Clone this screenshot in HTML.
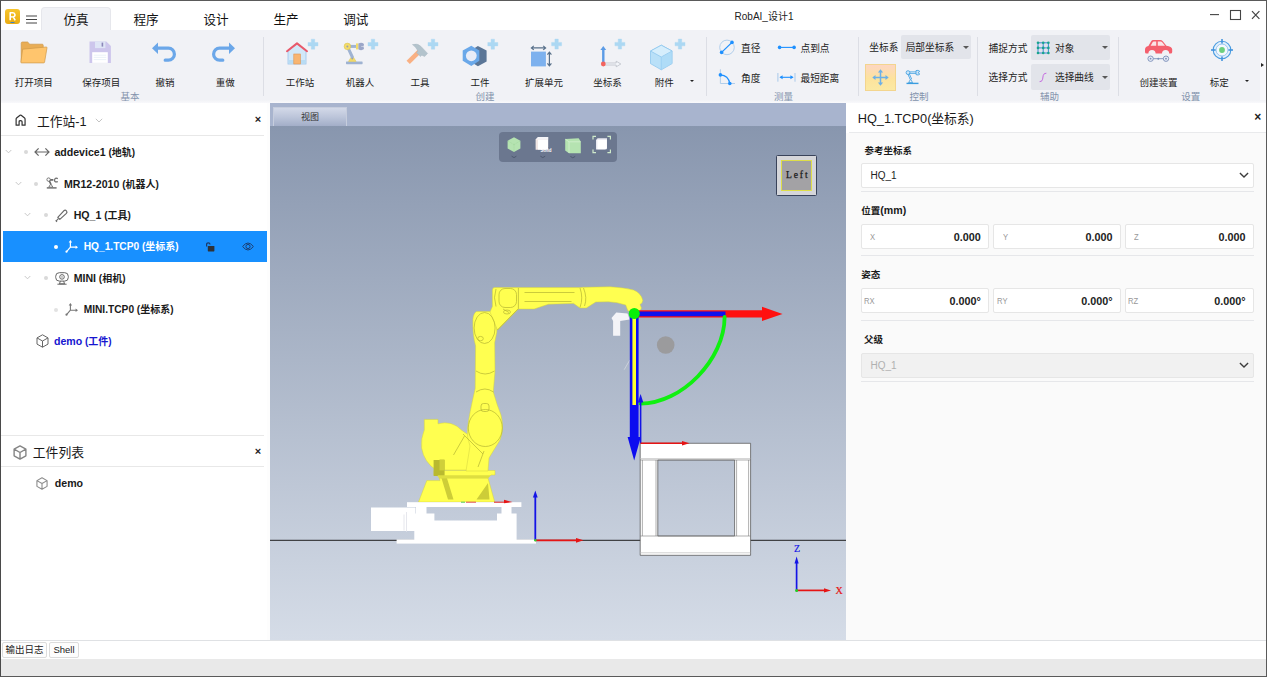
<!DOCTYPE html>
<html lang="zh">
<head>
<meta charset="utf-8">
<title>RobAI_设计1</title>
<style>
*{box-sizing:border-box;margin:0;padding:0}
html,body{width:1267px;height:677px;overflow:hidden;background:#fff}
body{font-family:"Liberation Sans","Noto Sans CJK SC",sans-serif;color:#222;position:relative;font-size:10px}
.abs{position:absolute}
svg{position:absolute;overflow:visible}
#frame{position:absolute;left:0;top:0;width:1267px;height:677px;border:1px solid #5a5a5a;border-left-color:#4a4a4a;border-bottom-width:1.4px;pointer-events:none;z-index:50}
#titlebar{position:absolute;left:0;top:0;width:1267px;height:30px;background:#fff}
#ribbon{position:absolute;left:0;top:30px;width:1267px;height:73px;background:#f1f2f6}
.tab{position:absolute;top:7px;height:23px;width:70px;font-size:12.6px;line-height:27.6px;text-align:center;color:#111;white-space:nowrap}
.tab.active{background:#f1f2f6;border:1px solid #e6e7ec;border-bottom:none;border-radius:4px 4px 0 0;line-height:25.6px}
.rl{position:absolute;top:75.5px;font-size:9.5px;line-height:14px;color:#222;white-space:nowrap;transform:translateX(-50%)}
.gl{position:absolute;top:90px;font-size:9.5px;line-height:13px;color:#8393ac;white-space:nowrap;transform:translateX(-50%)}
.vsep{position:absolute;top:37px;height:59px;width:1px;background:#dcdee5}
.st{position:absolute;font-size:9.7px;line-height:14px;color:#222;white-space:nowrap}
.combo{position:absolute;background:#e2e4ea;border-radius:2px}
.dd{position:absolute;width:0;height:0;border-left:2.2px solid transparent;border-right:2.2px solid transparent;border-top:2.6px solid #222}
.ddc{position:absolute;width:0;height:0;border-left:3.6px solid transparent;border-right:3.6px solid transparent;border-top:3.6px solid #585858}
#left{position:absolute;left:0;top:103px;width:270px;height:537px;background:#fff}
#lsplit{position:absolute;left:267px;top:103px;width:3px;height:537px;background:#fdfdfd}
#view{position:absolute;left:270px;top:103px;width:576px;height:537px;overflow:hidden;background:linear-gradient(#8896ae 22px,#d5dce7 100%)}
#right{position:absolute;left:846px;top:103px;width:421px;height:537px;background:#fafafa}
#bottom{position:absolute;left:0;top:640px;width:1267px;height:20px;background:#fff;border-top:1px solid #dfe1e4}
#status{position:absolute;left:0;top:659px;width:1267px;height:18px;background:#e9e9e9}
.trow{position:absolute;left:0;width:270px;height:30px;font-size:10px;font-weight:bold;color:#1a1a1a;white-space:nowrap}
.trow span.t{position:absolute;top:8px;line-height:14px}
.en{font-size:10.6px}
.en2{font-size:10.2px}
.dot{position:absolute;top:13px;width:4px;height:4px;border-radius:2px;background:#cfcfcf}
.chev{position:absolute}
.hsep{position:absolute;height:1px;background:#e8e8e8}
.plabel{position:absolute;font-size:9.5px;font-weight:bold;color:#1a1a1a;line-height:14px;white-space:nowrap}
.inp{position:absolute;height:25px;background:#fff;border:1px solid #e6e6e6;border-radius:2px}
.inp .k{position:absolute;left:8.5px;top:5px;font-size:9px;line-height:14px;color:#999;transform:scaleX(.85);transform-origin:0 50%}
.inp .v{position:absolute;right:7px;top:5px;font-size:10.8px;line-height:14px;font-weight:bold;color:#222}
.btab{position:absolute;top:.8px;height:16px;border:1px solid #dcdcdc;border-radius:2px;font-size:9.5px;line-height:14.5px;text-align:center;color:#222;background:#fdfdfd}
</style>
</head>
<body>
<div id="titlebar">
<!-- logo -->
<svg style="left:5px;top:9px" width="15" height="15" viewBox="0 0 15 15"><defs><linearGradient id="lg" x1="0" y1="0" x2="0" y2="1"><stop offset="0" stop-color="#f7c52d"/><stop offset="1" stop-color="#e9ab12"/></linearGradient></defs><rect width="15" height="15" rx="3" fill="url(#lg)"/><path d="M5.2 11.3V3.7h2.6a2.1 2.1 0 0 1 .5 4.15L10.2 11.3" fill="none" stroke="#fff" stroke-width="1.6" stroke-linejoin="round"/><path d="M5.2 7.9h2.6" stroke="#fff" stroke-width="1.5"/><rect x="5.5" y="13" width="4" height="1" fill="#3b82c4"/></svg>
<svg style="left:26px;top:15px" width="11" height="9" viewBox="0 0 11 9"><path d="M0 1h11M0 4.5h11M0 8h11" stroke="#444" stroke-width="1"/></svg>
<div class="tab active" style="left:41px">仿真</div>
<div class="tab" style="left:111px">程序</div>
<div class="tab" style="left:181px">设计</div>
<div class="tab" style="left:251px">生产</div>
<div class="tab" style="left:320.800px">调试</div>
<div class="abs" style="left:704px;top:9.700px;width:120px;text-align:center;font-size:10px;line-height:14px;color:#222">RobAI_设计1</div>
<svg style="left:1209px;top:9px" width="52" height="12" viewBox="0 0 52 12"><path d="M1 5.6h9" stroke="#444" stroke-width="1.1"/><rect x="21.5" y="1.5" width="10" height="9" fill="none" stroke="#444" stroke-width="1.1"/><path d="M43 2.2l7.4 7.6M50.4 2.2L43 9.8" stroke="#444" stroke-width="1.2"/></svg>
</div>
<div id="ribbon">
<div class="abs" style="left:1260px;top:0;width:7px;height:73px;background:#f8f8fb"></div>
<div class="abs" style="left:0;top:70px;width:1267px;height:3px;background:linear-gradient(#f1f2f6,#f9f9fb)"></div>
</div>
<div class="abs" style="left:1261px;top:63px;width:0;height:0;border-top:2.700px solid transparent;border-bottom:2.700px solid transparent;border-left:3px solid #222"></div>

<!-- group 基本 -->
<svg style="left:20px;top:41px" width="28" height="23" viewBox="0 0 28 23"><path d="M1.2 21.5V2.2Q1.2 1 2.4 1h5.2l2.2 2.2h12.4q1 0 1 1v3" fill="#e9ad55" stroke="#cf994a" stroke-width=".7"/><path d="M2.6 8.2L26.2 6q.9-.1.8.8L24.6 21q-.1.9-1 .9H1.6q-.8 0-.7-.8z" fill="#ffc56d" stroke="#cf994a" stroke-width=".7"/></svg>
<svg style="left:89px;top:41px" width="23" height="23" viewBox="0 0 23 23"><path d="M.5.5h16.8l4.6 4.6v16.8H.5z" fill="#cdc6ec"/><rect x="6" y=".5" width="10.4" height="6.6" fill="#dfe5f6"/><rect x="12.6" y="1.6" width="1.6" height="4" fill="#8a86b8"/><rect x="3.2" y="11.2" width="15.6" height="10.7" fill="#fff"/><path d="M4.8 14.2h12.4M4.8 16.4h12.4M4.8 18.6h12.4" stroke="#e4edf6" stroke-width=".8"/></svg>
<svg style="left:151px;top:41px" width="26" height="22" viewBox="0 0 26 22"><path d="M1 7.200L7 1.400V5.600H17.400A7.600 7.600 0 0 1 17.400 20.800H14.200Q12.600 20.800 12.600 19.200T14.200 17.600H17.400A4.400 4.400 0 0 0 17.400 8.800H7V13z" fill="#6ba7e9"/></svg>
<svg style="left:210px;top:40.600px" width="26" height="22" viewBox="0 0 26 22"><path d="M25 7.200L19 1.400V5.600H9.600A7.600 7.600 0 0 0 9.600 20.800H12.800Q14.400 20.800 14.400 19.200T12.800 17.600H9.600A4.400 4.400 0 0 1 9.600 8.800H19V13z" fill="#6ba7e9"/></svg>
<div class="rl" style="left:33.7px">打开项目</div>
<div class="rl" style="left:101.3px">保存项目</div>
<div class="rl" style="left:165px">撤销</div>
<div class="rl" style="left:225.3px">重做</div>
<div class="gl" style="left:130px">基本</div>
<div class="vsep" style="left:263px"></div>

<!-- group 创建 -->
<svg width="0" height="0" style="left:0;top:0"><defs><path id="plus" d="M-1.700-5h3.400v3.300h3.300v3.400h-3.300v3.300h-3.400v-3.300h-3.300v-3.400h3.300z" fill="#acd8f3" stroke="#acd8f3" stroke-width=".4" stroke-linejoin="round"/></defs></svg>
<!-- house -->
<svg style="left:285px;top:40px" width="36" height="26" viewBox="285 40 36 26"><rect x="288" y="50.5" width="18" height="13.5" fill="#d2e8f8" stroke="#9cc4ea" stroke-width=".8"/><rect x="288.4" y="60" width="17.2" height="3.6" fill="#b8dcf4"/><path d="M288 51l9-7.5 9 7.5z" fill="#d2e8f8"/><rect x="293.8" y="54" width="6.6" height="10" fill="#f8b571" stroke="#e09450" stroke-width=".6"/><path d="M287 51.2L297 43.4l10 7.8" fill="none" stroke="#e8596b" stroke-width="2" stroke-linecap="round" stroke-linejoin="round"/><use href="#plus" x="313" y="44.2"/></svg>
<!-- robot -->
<svg style="left:345px;top:40px" width="36" height="26" viewBox="345 40 36 26"><rect x="346" y="61.4" width="16.6" height="2.8" rx=".6" fill="#9fb3d2"/><path d="M348.5 61.4l3.8-6 3.8 6z" fill="#f3dc6a" stroke="#d9c04e" stroke-width=".5"/><path d="M352.3 57L347.4 46.4" stroke="#9fb3d2" stroke-width="3" stroke-linecap="round"/><path d="M347.4 46.4h9" stroke="#9fb3d2" stroke-width="3"/><circle cx="347.4" cy="46.4" r="3.3" fill="#f3dc6a" stroke="#d9c04e" stroke-width=".5"/><circle cx="347.4" cy="46.4" r="1" fill="#9a9fae"/><circle cx="352.3" cy="58.6" r=".9" fill="#9a9fae"/><rect x="356" y="43.4" width="2.4" height="6" fill="#f3dc6a"/><path d="M358.4 43.6q3-2 5.6.4l-.4 2.2h-2.4v.6h2.4l.4 2.2q-2.6 2.2-5.6.2z" fill="#9ba6c8"/><use href="#plus" x="373" y="44.2"/></svg>
<!-- hammer -->
<svg style="left:405px;top:40px" width="36" height="26" viewBox="405 40 36 26"><path d="M408.200 62.400L419.600 51.200" stroke="#f9b083" stroke-width="4.600"/><path d="M412.400 44.600q5-1.800 8.600 1.800l6.600 7-3 3.200-2.800-1.400-1.400 1.400-4-4 1.600-1.600q-1.800-3.800-5.600-6.400z" fill="#b3c3cc" stroke="#a3b4be" stroke-width=".4"/><use href="#plus" x="433" y="44.2"/></svg>
<!-- nut -->
<svg style="left:460px;top:40px" width="40" height="28" viewBox="460 40 40 28"><path d="M477.900 46l8.700 4.600v10.800l-8.700 4.800-4-2.500V48.500z" fill="#5b7697"/><path d="M471.300 45.800l8 4.600v10.400l-8 5.200-8.600-5.200V50.400z" fill="#6aa8e9"/><circle cx="471.300" cy="55.800" r="5.400" fill="#e8ecf7"/><use href="#plus" x="492.800" y="44.200"/></svg>
<!-- extend unit -->
<svg style="left:525px;top:38px" width="40" height="30" viewBox="525 38 40 30"><rect x="531" y="51.6" width="14.900" height="14.800" fill="#7db1ee"/><path d="M531.600 47.900h13.800M533.800 45.900l-2.400 2 2.400 2M543.200 45.900l2.400 2-2.400 2" fill="none" stroke="#58708a" stroke-width="1.200"/><path d="M549.400 52.400v13.200M547.400 54.600l2-2.400 2 2.400M547.400 63.400l2 2.400 2-2.400" fill="none" stroke="#58708a" stroke-width="1.200"/><use href="#plus" x="556.600" y="44.100"/></svg>
<!-- coordinate -->
<svg style="left:595px;top:38px" width="40" height="30" viewBox="595 38 40 30"><path d="M603.300 64V49" stroke="#5b9be6" stroke-width="2.400"/><path d="M600.400 50l2.900-3.900 2.900 3.900z" fill="#5b9be6"/><path d="M604 63h12.200v-1.800l4.600 2.800-4.600 2.800V65H604z" fill="#f4f6fa" stroke="#b4b9c2" stroke-width=".7"/><circle cx="603.300" cy="64" r="2.400" fill="#f2645f"/><use href="#plus" x="619.900" y="44.100"/></svg>
<!-- cube -->
<svg style="left:648px;top:38px" width="40" height="34" viewBox="648 38 40 34"><path d="M661.300 45.200l10.800 5.800v12.600l-10.800 6.200-10.800-6.200V51z" fill="#b9e0f8" stroke="#8ec7ee" stroke-width=".8" stroke-linejoin="round"/><path d="M661.300 45.200l10.800 5.800-10.800 6-10.800-6z" fill="#d6eefc" stroke="#8ec7ee" stroke-width=".8" stroke-linejoin="round"/><path d="M661.300 57v12.800" stroke="#8ec7ee" stroke-width=".8"/><path d="M661.300 57l10.800-6v12.600l-10.800 6.200z" fill="#a8d8f6" opacity=".6"/><use href="#plus" x="680" y="44.100"/></svg>
<div class="rl" style="left:300px">工作站</div>
<div class="rl" style="left:360px">机器人</div>
<div class="rl" style="left:420px">工具</div>
<div class="rl" style="left:480px">工件</div>
<div class="rl" style="left:544px">扩展单元</div>
<div class="rl" style="left:607.4px">坐标系</div>
<div class="rl" style="left:664.2px">附件</div>
<div class="dd" style="left:689.700px;top:79.800px"></div>
<div class="gl" style="left:485px">创建</div>
<div class="vsep" style="left:706px"></div>

<!-- group 测量 -->
<svg style="left:716px;top:38px" width="90" height="50" viewBox="716 38 90 50"><circle cx="727" cy="47.400" r="7.300" fill="none" stroke="#a9c9ea" stroke-width=".9"/><path d="M721.600 52.400L732 42.400" stroke="#1e90ff" stroke-width="1.300"/><circle cx="721.600" cy="52.400" r="1.800" fill="#1e90ff"/><circle cx="732" cy="42.400" r="1.800" fill="#1e90ff"/>
<path d="M779.600 47.400h14.500" stroke="#1e90ff" stroke-width="1.100"/><circle cx="779.600" cy="47.400" r="1.800" fill="#1e90ff"/><circle cx="794.100" cy="47.400" r="1.800" fill="#1e90ff"/>
<path d="M720.400 69.300v14.200h14.600" fill="none" stroke="#a9c9ea" stroke-width=".9"/><path d="M720.400 74.900q8 .6 9.400 8.600" fill="none" stroke="#1e90ff" stroke-width="1.200"/><circle cx="720.400" cy="74.900" r="1.800" fill="#1e90ff"/><circle cx="729.800" cy="83.500" r="1.800" fill="#1e90ff"/>
<path d="M777.900 73v8.700M795 73v8.700" stroke="#a9c9ea" stroke-width="1"/><path d="M780.500 77.300h12" stroke="#1e90ff" stroke-width="1.100"/><path d="M779.400 77.300l3.200-2v4zM793.600 77.300l-3.200-2v4z" fill="#1e90ff"/></svg>
<div class="st" style="left:741px;top:41.500px">直径</div>
<div class="st" style="left:800.500px;top:41.500px">点到点</div>
<div class="st" style="left:741px;top:71.500px">角度</div>
<div class="st" style="left:800.500px;top:71.500px">最短距离</div>
<div class="gl" style="left:783.500px">测量</div>
<div class="vsep" style="left:858px"></div>

<!-- group 控制 -->
<div class="st" style="left:869.300px;top:41px">坐标系</div>
<div class="combo" style="left:901px;top:35px;width:70px;height:24px"></div>
<div class="st" style="left:905.700px;top:41px">局部坐标系</div>
<div class="ddc" style="left:962.600px;top:46px"></div>
<div class="abs" style="left:865px;top:63.500px;width:31px;height:27px;background:linear-gradient(#fdd6c2,#fde39c 55%,#fbe9a4);border:1px solid #f3d58e"></div>
<svg style="left:872px;top:69px" width="17" height="17" viewBox="-8.500 -8.500 17 17"><path d="M0-5.500v11M-5.500 0h11" stroke="#6cb0e8" stroke-width="1.500"/><path d="M0-8.200l2.600 3.200h-5.200zM0 8.200l2.600-3.200h-5.200zM-8.200 0l3.200-2.600v5.200zM8.200 0l-3.200-2.600v5.200z" fill="#6cb0e8"/></svg>
<svg style="left:905px;top:69px" width="17" height="16" viewBox="905 69 17 16"><path d="M906.500 83.400h12" stroke="#3b9de0" stroke-width="1.400"/><path d="M908.600 82.600l2-3.400 2 3.400z" fill="none" stroke="#3b9de0" stroke-width=".8"/><path d="M911 79.400l-2.800-6.400M909.600 72.600h6.600" stroke="#3b9de0" stroke-width="2.200"/><path d="M911 79.400l-2.800-6.400M909.600 72.600h6.600" stroke="#cfe6f8" stroke-width=".9"/><circle cx="908" cy="72.600" r="1.900" fill="#cfe6f8" stroke="#3b9de0" stroke-width=".8"/><path d="M916 70.600q2.400-1 3.800.8l-1.400.8v1l1.400.8q-1.400 1.800-3.800.6z" fill="#cfe6f8" stroke="#3b9de0" stroke-width=".8"/></svg>
<div class="gl" style="left:919px">控制</div>
<div class="vsep" style="left:977px"></div>

<!-- group 辅助 -->
<div class="st" style="left:988.600px;top:41.800px">捕捉方式</div>
<div class="st" style="left:988.600px;top:71.400px">选择方式</div>
<div class="combo" style="left:1031px;top:35px;width:79px;height:25px"></div>
<div class="combo" style="left:1031px;top:64px;width:79px;height:25.500px"></div>
<svg style="left:1036px;top:41px" width="14" height="14" viewBox="1036 41 14 14"><path d="M1038 42.800h10.400v10.200H1038zM1043.200 42.800v10.200M1038 47.900h10.400" fill="none" stroke="#2b7fd4" stroke-width=".9"/><g fill="#17a58c"><circle cx="1038" cy="42.800" r="1.300"/><circle cx="1043.200" cy="42.800" r="1.300"/><circle cx="1048.400" cy="42.800" r="1.300"/><circle cx="1038" cy="47.900" r="1.300"/><circle cx="1043.200" cy="47.900" r="1.300"/><circle cx="1048.400" cy="47.900" r="1.300"/><circle cx="1038" cy="53" r="1.300"/><circle cx="1043.200" cy="53" r="1.300"/><circle cx="1048.400" cy="53" r="1.300"/></g></svg>
<svg style="left:1038px;top:72px" width="10" height="11" viewBox="1038 72 10 11"><path d="M1039.600 81.600q2.400.4 3-2.400l.6-3.600q.6-2.600 3.200-2.400" fill="none" stroke="#c56be0" stroke-width="1"/></svg>
<div class="st" style="left:1055px;top:41.800px">对象</div>
<div class="st" style="left:1055px;top:71.400px">选择曲线</div>
<div class="ddc" style="left:1101.600px;top:46.300px"></div>
<div class="ddc" style="left:1101.600px;top:76px"></div>
<div class="gl" style="left:1049.400px">辅助</div>
<div class="vsep" style="left:1118px"></div>

<!-- group 设置 -->
<svg style="left:1143px;top:38px" width="32" height="26" viewBox="1143 38 32 26"><path d="M1145 50.400q-.4-3.600 3.400-4.400l2.600-4.600q.8-1.400 2.400-1.400h6.800q1.600 0 2.600 1.200l3.600 4.600q5.400.6 5.800 3.400v2.800q0 1.600-1.600 1.600h-1.400a3.600 3.600 0 0 0-7.200 0h-6.400a3.600 3.600 0 0 0-7.200 0h-1.800q-1.600 0-1.600-1.600z" fill="#f45f6d"/><path d="M1150.600 45.800l2-3.600q.4-.6 1.200-.6h2.400v4.200zM1157.800 41.600h3q.8 0 1.400.6l2.800 3.600h-7.200z" fill="#fbe4e6"/><path d="M1150.600 58.700h15.400" stroke="#7a8fb8" stroke-width=".9"/><circle cx="1150.600" cy="58.700" r="2.700" fill="#e8ecf7" stroke="#7a8fb8" stroke-width=".9"/><circle cx="1166" cy="58.700" r="2.700" fill="#e8ecf7" stroke="#7a8fb8" stroke-width=".9"/><circle cx="1150.600" cy="58.700" r=".9" fill="#7a8fb8"/><circle cx="1166" cy="58.700" r=".9" fill="#7a8fb8"/><circle cx="1158.300" cy="58.700" r="1" fill="#7a8fb8"/></svg>
<svg style="left:1210px;top:38px" width="24" height="24" viewBox="-12 -12 24 24"><circle r="8.800" fill="#e4f0fb" stroke="#4a9ce0" stroke-width="1.100"/><circle r="6" fill="#f4f8fd" stroke="#8cc0ee" stroke-width=".9"/><path d="M0-11v4.600M0 11v-4.600M-11 0h4.600M11 0h-4.600" stroke="#3b8edc" stroke-width="1.500"/><circle r="2.900" fill="#6ccf7e"/></svg>
<div class="rl" style="left:1158.600px">创建装置</div>
<div class="rl" style="left:1219.200px">标定</div>
<div class="dd" style="left:1244.800px;top:79.800px"></div>
<div class="gl" style="left:1190.800px">设置</div>
<div id="left"></div>
<div id="lsplit"></div>
<!-- header -->
<svg style="left:15.400px;top:113.600px" width="11.200" height="12.200" viewBox="0 0 12 13"><path d="M1.200 12V5.200Q1.200 4.600 1.700 4.200L5.400 1.300Q6 .9 6.600 1.300L10.300 4.200Q10.800 4.600 10.800 5.200V12H7.600V8.200Q7.600 7 6 7T4.400 8.200V12z" fill="none" stroke="#333" stroke-width="1.300" stroke-linejoin="round"/></svg>
<div class="abs" style="left:37px;top:112.800px;font-size:12.75px;line-height:18px;color:#1a1a1a;white-space:nowrap">工作站-1</div>
<svg style="left:95px;top:118px" width="8" height="5" viewBox="0 0 8 5"><path d="M.8.800L4 4 7.200.800" fill="none" stroke="#c4c4c4" stroke-width="1"/></svg>
<div class="abs" style="left:254.800px;top:112px;font-size:11px;line-height:14px;font-weight:bold;color:#222">×</div>
<div class="hsep" style="left:1px;top:135px;width:263px"></div>

<!-- selected row bg -->
<div class="abs" style="left:3px;top:231px;width:264px;height:31px;background:#1890ff"></div>

<!-- row 1 -->
<svg class="chev" style="left:5px;top:149.300px" width="7" height="5" viewBox="0 0 8 5"><path d="M.8.800L4 4 7.200.800" fill="none" stroke="#c0c0c0" stroke-width="1"/></svg>
<div class="abs dotc" style="left:24px;top:150.300px;width:4px;height:4px;border-radius:2px;background:#d9d9d9"></div>
<svg style="left:34px;top:147.300px" width="16" height="10" viewBox="0 0 16 10"><path d="M1.200 5h13.600M4.600 1.400L1 5l3.600 3.600M11.400 1.400L15 5l-3.600 3.600" fill="none" stroke="#666" stroke-width="1.200"/></svg>
<div class="trow" style="top:137.300px"><span class="t" style="left:54.400px"><span class="en">addevice1</span> (地轨)</span></div>
<!-- row 2 -->
<svg class="chev" style="left:14.500px;top:180.650px" width="7" height="5" viewBox="0 0 8 5"><path d="M.8.800L4 4 7.200.800" fill="none" stroke="#c0c0c0" stroke-width="1"/></svg>
<div class="abs" style="left:34px;top:181.650px;width:4px;height:4px;border-radius:2px;background:#d9d9d9"></div>
<svg style="left:46px;top:177.150px" width="13" height="12" viewBox="0 0 13 12"><path d="M.800 10.900h9.800" stroke="#6a6a6a" stroke-width="1.400"/><path d="M2.800 10.200l2-3.400 2 3.400z" fill="#fff" stroke="#6a6a6a" stroke-width=".9"/><path d="M4.800 7L2.800 2.800H7.400" fill="none" stroke="#6a6a6a" stroke-width="1.700" stroke-linejoin="round"/><circle cx="2.600" cy="2.600" r="1.700" fill="#fff" stroke="#6a6a6a" stroke-width=".9"/><path d="M11.800 1.600q-2.900-1.300-3.200 1.400t3.200 1.600" fill="none" stroke="#6a6a6a" stroke-width="1.200"/></svg>
<div class="trow" style="top:168.750px"><span class="t" style="left:64px"><span class="en">MR12-2010</span> (机器人)</span></div>
<!-- row 3 -->
<svg class="chev" style="left:24px;top:212px" width="7" height="5" viewBox="0 0 8 5"><path d="M.8.800L4 4 7.200.800" fill="none" stroke="#c0c0c0" stroke-width="1"/></svg>
<div class="abs" style="left:43.500px;top:213px;width:4px;height:4px;border-radius:2px;background:#d9d9d9"></div>
<svg style="left:55px;top:209px" width="13" height="13" viewBox="0 0 13 13"><path d="M1 12.200l2.400-2.600M.6 11.400l1.400 1.400" stroke="#6a6a6a" stroke-width="1.100"/><path d="M2.800 8.400L8.800 1.800q1.400-1.200 2.600 0t0 2.600L4.800 10.400z" fill="none" stroke="#6a6a6a" stroke-width="1.200" stroke-linejoin="round"/></svg>
<div class="trow" style="top:200.200px"><span class="t" style="left:73.700px"><span class="en">HQ_1</span> (工具)</span></div>
<!-- row 4 selected -->
<div class="abs" style="left:53.500px;top:244.500px;width:4px;height:4px;border-radius:2px;background:#fff"></div>
<svg style="left:65px;top:240px" width="14" height="13" viewBox="0 0 14 13"><path d="M5.400 1.400V7.200H11.600M5.400 7.200L1.600 11.600" fill="none" stroke="#fff" stroke-width="1.200"/><path d="M5.400 0l1.700 2.400H3.700zM13 7.200l-2.400 1.700V5.500z" fill="#fff"/><circle cx="1.500" cy="11.700" r="1.100" fill="#fff"/></svg>
<div class="trow" style="top:231.600px;color:#fff"><span class="t" style="left:83.700px"><span class="en2">HQ_1.TCP0</span> (坐标系)</span></div>
<svg style="left:205px;top:241.500px" width="10" height="10" viewBox="0 0 10 10"><path d="M1.600 4.400V2.600Q1.600.800 3.300.800T5 2.600" fill="none" stroke="#1c3a68" stroke-width="1.200"/><rect x="2.800" y="4" width="6.600" height="5.400" rx=".6" fill="#2e3238"/></svg>
<svg style="left:242px;top:242px" width="12" height="9" viewBox="0 0 12 9"><path d="M.6 4.500Q6-2.500 11.400 4.500 6 11.500.6 4.500z" fill="none" stroke="#1c3e72" stroke-width="1"/><circle cx="6" cy="4.500" r="2.100" fill="none" stroke="#1c3e72" stroke-width="1"/></svg>
<!-- row 5 -->
<svg class="chev" style="left:24px;top:275.200px" width="7" height="5" viewBox="0 0 8 5"><path d="M.8.800L4 4 7.200.800" fill="none" stroke="#c0c0c0" stroke-width="1"/></svg>
<div class="abs" style="left:43.500px;top:276.200px;width:4px;height:4px;border-radius:2px;background:#d9d9d9"></div>
<svg style="left:55px;top:271.700px" width="14" height="13" viewBox="0 0 14 13"><rect x=".700" y=".700" width="12.600" height="8.400" rx="3.600" fill="none" stroke="#666" stroke-width="1"/><circle cx="7" cy="4.900" r="2.300" fill="none" stroke="#666" stroke-width="1"/><circle cx="7" cy="4.900" r=".7" fill="#666"/><path d="M5.400 9.200l-1 2.600h5.200l-1-2.600M2.400 12.200h9.200" fill="none" stroke="#666" stroke-width="1"/></svg>
<div class="trow" style="top:263.100px"><span class="t" style="left:73.700px"><span class="en">MINI</span> (相机)</span></div>
<!-- row 6 -->
<div class="abs" style="left:53.500px;top:307.550px;width:4px;height:4px;border-radius:2px;background:#e2e2e2"></div>
<svg style="left:65px;top:303.050px" width="14" height="13" viewBox="0 0 14 13"><path d="M5.400 1.400V7.200H11.600M5.400 7.200L1.600 11.600" fill="none" stroke="#777" stroke-width="1.100"/><path d="M5.400 0l1.700 2.400H3.700zM13 7.200l-2.400 1.700V5.500z" fill="#777"/><circle cx="1.500" cy="11.700" r="1.100" fill="#777"/></svg>
<div class="trow" style="top:294.550px"><span class="t" style="left:83.700px"><span class="en2">MINI.TCP0</span> (坐标系)</span></div>
<!-- row 7 -->
<svg style="left:35.500px;top:333.800px" width="13" height="14" viewBox="0 0 13 14"><path d="M6.500.800l5.500 3.100v6.200l-5.500 3.100L1 10.100V3.900zM1 3.900L6.500 7 12 3.900M6.500 7v6.200" fill="none" stroke="#666" stroke-width="1" stroke-linejoin="round"/></svg>
<div class="trow" style="top:325.900px;color:#1616d0"><span class="t" style="left:54px"><span class="en">demo</span> (工件)</span></div>

<!-- workpiece list -->
<div class="hsep" style="left:1px;top:435px;width:263px"></div>
<svg style="left:13px;top:444.500px" width="14" height="15" viewBox="0 0 13 14"><path d="M6.500.800l5.500 3.100v6.200l-5.500 3.100L1 10.100V3.900zM1 3.900L6.500 7 12 3.900M6.500 7v6.200" fill="none" stroke="#858585" stroke-width="1.300" stroke-linejoin="round"/></svg>
<div class="abs" style="left:32.800px;top:443.800px;font-size:12.8px;line-height:18px;color:#1a1a1a;white-space:nowrap">工件列表</div>
<div class="abs" style="left:254.800px;top:444px;font-size:11px;line-height:14px;font-weight:bold;color:#222">×</div>
<div class="hsep" style="left:1px;top:465.700px;width:263px"></div>
<svg style="left:36px;top:476.500px" width="12" height="13" viewBox="0 0 13 14"><path d="M6.500.800l5.500 3.100v6.200l-5.500 3.100L1 10.100V3.900zM1 3.900L6.500 7 12 3.900M6.500 7v6.200" fill="none" stroke="#8c8c8c" stroke-width="1.200" stroke-linejoin="round"/></svg>
<div class="trow" style="top:468px"><span class="t" style="left:54.800px"><span class="en">demo</span></span></div>
<div id="view"></div>
<!-- view tab strip -->
<div class="abs" style="left:270px;top:103px;width:576px;height:22.500px;background:#a8b4ce"></div>
<div class="abs" style="left:273px;top:106.500px;width:74px;height:19px;background:linear-gradient(#d3d9e8,#bcc5da 50%,#a3aec8);border:1px solid #c6cddd;border-bottom:none;font-size:9px;line-height:18px;text-align:center;color:#333">视图</div>
<svg style="left:270px;top:125px" width="576" height="515" viewBox="270 125 576 515">
<!-- ground line -->
<path d="M270 540.300H846" stroke="#1e1e1e" stroke-width="1"/>
<!-- toolbar pill -->
<rect x="499" y="132" width="118" height="30" rx="4" fill="#6b778f"/>
<g>
<path d="M514 137.200l6.400 3.600v7.600l-6.400 3.600-6.400-3.600v-7.600z" fill="#b5e3b1"/><path d="M514 144.600v7.200M514 144.600l-6.200-3.600M514 144.600l6.200-3.600" stroke="#9ad296" stroke-width=".6" stroke-dasharray="1 1"/>
<path d="M511.600 156.200l2.400 1.400 2.400-1.400" fill="none" stroke="#4e5a70" stroke-width="1"/>
<path d="M535.600 139.400l2.400-2.400h10.200v10.400l-2.400 2.400h-10.200z" fill="#f0e6e4"/><rect x="538" y="139.600" width="10" height="10" fill="#fff"/><path d="M535.800 139.400l2.300-2.300h10v2.300z" fill="#f4f4f8"/>
<path d="M540.400 156.200l2.400 1.400 2.400-1.400" fill="none" stroke="#4e5a70" stroke-width="1"/>
<path d="M565.200 139L578.600 138.300L580.800 141.600V153.200H569L565.200 150.600z" fill="#b5e3b1"/><path d="M565.400 139.200L569 141.800V153M569 141.800H580.600" fill="none" stroke="#d8f0d5" stroke-width=".7"/>
<path d="M570.400 156.400l2.400 1.400 2.400-1.400" fill="none" stroke="#4e5a70" stroke-width="1"/>
<path d="M596 140l1.600-1.800h9.400v9.400l-1.600 1.800h-9.400z" fill="#e8e8f0"/><rect x="597.400" y="139.800" width="9.400" height="9.400" fill="#fff"/>
<path d="M593 139.400v-3h3M607.400 136.400h3v3M610.400 149.600v3h-3M596 152.600h-3v-3" fill="none" stroke="#cfeacb" stroke-width="1.200"/>
</g>
<text x="546" y="151.600" font-size="4.500" fill="#fff" font-family="Liberation Sans,sans-serif" text-anchor="middle" font-weight="bold">Solid</text>
<!-- Left cube -->
<rect x="776.500" y="155.500" width="40" height="40" rx="1" fill="#d5d6da" stroke="#39435a" stroke-width="1"/>
<rect x="781.500" y="160.500" width="30" height="30" fill="#a3a2a5" stroke="#e2e23c" stroke-width=".9"/>
<text x="797.700" y="178.100" font-size="9.600" fill="#1c1c1c" font-family="Liberation Serif,serif" text-anchor="middle" letter-spacing="1.900" stroke="#1c1c1c" stroke-width=".25">Left</text>

<!-- robot -->
<g fill="#ffff50" stroke="#d2d240" stroke-width=".5" stroke-linejoin="round">
<!-- base drum -->
<path d="M424.300 419.400H438V423.800Q452 420 462 430.500L476 440L488 470H436Q424 462 421.600 448Q420.800 438 424.300 430z"/>
<!-- pedestal -->
<path d="M426.800 480.600H440L439.200 478H488L494.700 502H418.500z"/>
<path d="M434 470.500H495V475H491L488 478H439.200L437 475H434z"/>
<rect x="433.600" y="460" width="11" height="16" fill="#b9b930" stroke="none"/>
<rect x="439.500" y="459.400" width="5" height="11" fill="#cfcf3a" stroke="none"/>
<!-- lower arm -->
<path d="M476.500 311.500H490L496.800 318V332L494.700 342.500L495 371L493.300 392Q497 405 501 415Q504.500 428 500 440L489 458L488 471H466L470 446Q466.500 438 467.600 428Q469 415 475.200 388.600L475.600 346Q472.500 335 472.900 319.500Q473.500 313 476.500 311.500z"/>
<!-- upper arm -->
<path d="M494.500 287.600H580L583 287.300L610 286.800Q624 287.500 633.600 290Q641 293 642.800 300.300Q642.800 303 640 304.500L641.500 308L640 311H628L625.700 305Q617 302 608.400 301.800L595.800 302L586.300 308H580L573.600 303.400L548.400 304.200L534.200 309H518.400L497.500 330L490 312L492.400 306.600V290Q492.600 287.600 494.500 287.600z"/>
</g>
<path d="M441.500 478.200h5.500l6.500 21.300h-5.500zM488 483l1.500 16.500h-13z" fill="#cdcd38"/><path d="M437.500 475.200h53l-2.500 2.800h-48.500z" fill="#dede40"/>
<g fill="none" stroke="#b4b432" stroke-width=".7">
<path d="M496 289q-3 8.500 0 17.500M518.400 288v20.500M524.500 292.500h50M524.500 301.500h47M580 288q3.500 10 0 19.500M583.500 288q4 10 1 18M518.400 308.500l-21 21.500M503 309l6 3.500"/>
<rect x="499" y="288.500" width="17.500" height="19" rx="6"/>
<ellipse cx="507" cy="312" rx="3.500" ry="2"/>
<ellipse cx="484.600" cy="328" rx="10.500" ry="15.500"/><ellipse cx="480.500" cy="338.600" rx="2.800" ry="2.200"/>
<ellipse cx="485.300" cy="428" rx="17" ry="18.500"/><rect x="481" y="403.500" width="8" height="8" rx="2.500"/>
<path d="M476 371q9 6 18.500 0M476 392q9-6 17.500 0M453.500 455l11-19M463 434l20 20M478 467l6-16"/>

</g>
<!-- tool white -->
<path d="M611.500 318L616.300 312.500L627.500 313.500L629.700 319.500L620.200 321V335.800H613.100V321z" fill="#f3f3f7"/>
<path d="M624.200 369.700l5.500-9.500" stroke="#d4d7e0" stroke-width=".8"/>
<!-- grey sphere -->
<circle cx="665.700" cy="345" r="8.800" fill="#9b9b9d"/>

<!-- track -->
<g fill="#fff">
<rect x="407" y="502.200" width="114.400" height="4.800"/>
<rect x="371" y="507.500" width="44.500" height="23.500"/>
<path d="M414.300 513.400h20.100v7.100h62.600v-7.100h19.600V540H414.300z"/><rect x="416" y="506.500" width="10.500" height="7.500"/><rect x="501.500" y="506.500" width="10" height="7.500"/>
<rect x="396.600" y="539.400" width="139.400" height="4.200"/>
</g>
<path d="M404 514.500v16M406.500 512v20" stroke="#dfe1e8" stroke-width=".8"/>
<path d="M466 502.200h10" stroke="#e05050" stroke-width="1"/><path d="M461 502.200h4" stroke="#5c5" stroke-width="1"/>
<path d="M494 502.200h10" stroke="#e02020" stroke-width="1"/><path d="M504 499.800l8.500 2.300-8.500 1.200z" fill="#e61414"/>
<!-- small triad at track end -->
<path d="M535.300 540.300V496" stroke="#1414e6" stroke-width="1.800"/><path d="M532.900 497.500l2.400-7 2.400 7z" fill="#1414e6"/>
<path d="M535.300 540.300H577" stroke="#e61414" stroke-width="1.800"/><path d="M576 537.900l7.500 2.400-7.500 2.400z" fill="#e61414"/>
<circle cx="535.300" cy="540.300" r="1.200" fill="#3c3"/>

<!-- table -->
<path d="M640.200 443.300h110.400v112H640.200zM657.800 460v76h76.800v-76z" fill="#fff" fill-rule="evenodd" stroke="#4a4a4a" stroke-width=".7"/>
<path d="M640.200 460h110.400M640.200 536h110.400M642.400 460v76M656 460v76M736.600 460v76M748.600 460v76" stroke="#7a7a7a" stroke-width=".6" fill="none"/>
<path d="M640.600 458.600h109.600M640.600 552.800h109.600" stroke="#cdcdcd" stroke-width=".9"/>
<path d="M658 540.300h76.400" stroke="#1e1e1e" stroke-width="0"/>
<!-- big gizmo -->
<path d="M634 313.900H764" stroke="#ff1010" stroke-width="7.200"/>
<path d="M762 306.700l20.500 7.200-20.500 7.200z" fill="#ff1010"/>
<path d="M634 313.900h91.500" stroke="#1010ee" stroke-width="4.600"/>
<path d="M634.200 313V440" stroke="#0c0cf0" stroke-width="8.800"/>
<path d="M627.600 437h13.200l-6.600 23.500z" fill="#0c0cf0"/>
<path d="M634.200 313v92" stroke="#ffff30" stroke-width="3.600"/>
<path d="M724.600 317C724.600 359.400 681.700 403.600 640.500 403.600" fill="none" stroke="#10f010" stroke-width="3.800" stroke-linecap="round"/>
<circle cx="634.300" cy="313.500" r="5.500" fill="#08ee08"/>
<!-- small triad at table -->
<path d="M640.600 443.300V399" stroke="#1414e6" stroke-width="1.600"/><path d="M637.900 402.500l2.700-8.500 2.700 8.500z" fill="#1414e6"/>
<path d="M640.600 443.300H683" stroke="#e61414" stroke-width="1.600"/><path d="M682 441l7.500 2.300-7.500 2.300z" fill="#e61414"/>

<!-- world triad -->
<path d="M796.600 590.400V562" stroke="#1414e6" stroke-width="1.700"/><path d="M794.500 563.500l2.100-7 2.100 7z" fill="#1414e6"/>
<path d="M796.600 590.400H825" stroke="#e61414" stroke-width="1.700"/><path d="M824 588.300l7 2.100-7 2.100z" fill="#e61414"/>
<circle cx="796.600" cy="590.400" r="1.500" fill="#2c2"/>
<text x="797" y="552" font-size="10" fill="#1414e6" font-family="Liberation Serif,serif" text-anchor="middle" stroke="#1414e6" stroke-width=".2">Z</text>
<text x="839" y="593.800" font-size="10" fill="#e61414" font-family="Liberation Serif,serif" text-anchor="middle" stroke="#e61414" stroke-width=".2">X</text>
</svg>
<div id="right"></div>
<div class="abs" style="left:846px;top:103px;width:421px;height:29.500px;background:#fff"></div>
<div class="abs" style="left:857.700px;top:110px;font-size:12.75px;line-height:18px;color:#1a1a1a;white-space:nowrap">HQ_1.TCP0(坐标系)</div>
<div class="abs" style="left:1254.200px;top:109.800px;font-size:12px;line-height:14px;font-weight:bold;color:#222">×</div>
<div class="hsep" style="left:849px;top:132.300px;width:418px;background:#e9eaec"></div>

<div class="plabel" style="left:864.400px;top:144px">参考坐标系</div>
<div class="inp" style="left:860.500px;top:163px;width:393px;height:24.500px"><span class="abs" style="left:9px;top:5px;font-size:10px;line-height:14px;color:#222">HQ_1</span>
<svg style="left:377.200px;top:7.600px" width="10" height="6.400" viewBox="0 0 11 7"><path d="M1 1.200l4.500 4.400L10 1.200" fill="none" stroke="#3c3c3c" stroke-width="1.500"/></svg></div>
<div class="hsep" style="left:861px;top:190.800px;width:392.500px;background:#e6e7ea"></div>

<div class="plabel" style="left:861.300px;top:203px">位置<span class="en">(mm)</span></div>
<div class="inp" style="left:860.500px;top:224.300px;width:128.300px;height:24.400px"><span class="k">X</span><span class="v">0.000</span></div>
<div class="inp" style="left:993px;top:224.300px;width:127.500px;height:24.400px"><span class="k">Y</span><span class="v">0.000</span></div>
<div class="inp" style="left:1124.500px;top:224.300px;width:129px;height:24.400px"><span class="k">Z</span><span class="v">0.000</span></div>
<div class="hsep" style="left:861px;top:255px;width:392.500px;background:#e6e7ea"></div>

<div class="plabel" style="left:861.300px;top:268px">姿态</div>
<div class="inp" style="left:860.500px;top:288.400px;width:128.300px;height:24.400px"><span class="k" style="left:2.500px">RX</span><span class="v">0.000°</span></div>
<div class="inp" style="left:993px;top:288.400px;width:127.500px;height:24.400px"><span class="k" style="left:2.500px">RY</span><span class="v">0.000°</span></div>
<div class="inp" style="left:1124.500px;top:288.400px;width:129px;height:24.400px"><span class="k" style="left:2.500px">RZ</span><span class="v">0.000°</span></div>
<div class="hsep" style="left:861px;top:320px;width:392.500px;background:#e6e7ea"></div>

<div class="plabel" style="left:864px;top:332.600px">父级</div>
<div class="inp" style="left:860.500px;top:352.500px;width:393px;height:25px;background:#f1f1f1;border-color:#e6e6e6"><span class="abs" style="left:9px;top:5px;font-size:10px;line-height:14px;color:#b0b0b0">HQ_1</span>
<svg style="left:377.200px;top:8.100px" width="10" height="6.400" viewBox="0 0 11 7"><path d="M1 1.200l4.500 4.400L10 1.200" fill="none" stroke="#3c3c3c" stroke-width="1.500"/></svg></div>
<div class="hsep" style="left:861px;top:381px;width:392.500px;background:#e6e7ea"></div>
<div id="bottom">
<div class="btab" style="left:2px;width:45px">输出日志</div>
<div class="btab" style="left:49px;width:30px">Shell</div>
</div>
<div id="status"></div>
<div id="frame"></div>
</body>
</html>
